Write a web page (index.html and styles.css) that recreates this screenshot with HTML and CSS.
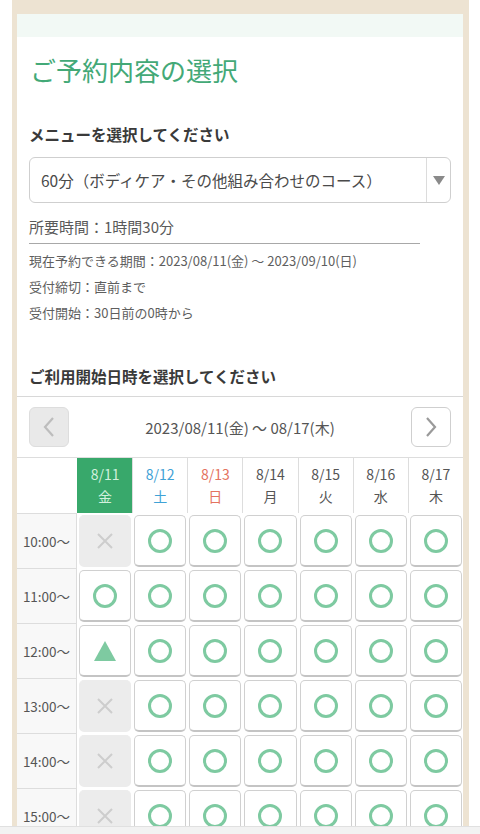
FILE: index.html
```html
<!DOCTYPE html>
<html lang="ja">
<head>
    <meta charset="utf-8">
    <title>ご予約内容の選択</title>
    <link rel="stylesheet" href="styles.css">
</head>
<body>
<div class="frame">
    <div class="card">
        <div class="card-band"></div>
        <h1 class="title">ご予約内容の選択</h1>

        <div class="section">
            <h2 class="sub-title">メニューを選択してください</h2>
            <div class="select">
                <span class="select-text">60分（ボディケア・その他組み合わせのコース）</span>
                <span class="select-arrow"></span>
            </div>
            <p class="duration">所要時間：1時間30分</p>
            <ul class="info">
                <li>現在予約できる期間：2023/08/11(金) 〜 2023/09/10(日)</li>
                <li>受付締切：直前まで</li>
                <li>受付開始：30日前の0時から</li>
            </ul>
            <h2 class="sub-title second">ご利用開始日時を選択してください</h2>
        </div>

        <div class="calendar">
            <div class="cal-nav">
                <button class="nav-btn disabled">
                    <svg width="12" height="22" viewBox="0 0 12 22"><polyline points="10,2 2,11 10,20" fill="none" stroke="#bdbdbd" stroke-width="2.2"/></svg>
                </button>
                <span class="cal-range">2023/08/11(金) 〜 08/17(木)</span>
                <button class="nav-btn">
                    <svg width="12" height="22" viewBox="0 0 12 22"><polyline points="2,2 10,11 2,20" fill="none" stroke="#9a9a9a" stroke-width="2.2"/></svg>
                </button>
            </div>

            <div class="grid">
                <div class="head blank"></div>
                <div class="head today">8/11<br>金</div>
                <div class="head sat">8/12<br>土</div>
                <div class="head sun">8/13<br>日</div>
                <div class="head">8/14<br>月</div>
                <div class="head">8/15<br>火</div>
                <div class="head">8/16<br>水</div>
                <div class="head">8/17<br>木</div>

                <div class="time">10:00〜</div>
                <div class="slot"><span class="mark off"><svg width="16" height="16" viewBox="0 0 16 16"><path d="M1 1L15 15M15 1L1 15" stroke="#cdcdcd" stroke-width="2"/></svg></span></div>
                <div class="slot"><span class="mark ok"></span></div>
                <div class="slot"><span class="mark ok"></span></div>
                <div class="slot"><span class="mark ok"></span></div>
                <div class="slot"><span class="mark ok"></span></div>
                <div class="slot"><span class="mark ok"></span></div>
                <div class="slot"><span class="mark ok"></span></div>

                <div class="time">11:00〜</div>
                <div class="slot"><span class="mark ok"></span></div>
                <div class="slot"><span class="mark ok"></span></div>
                <div class="slot"><span class="mark ok"></span></div>
                <div class="slot"><span class="mark ok"></span></div>
                <div class="slot"><span class="mark ok"></span></div>
                <div class="slot"><span class="mark ok"></span></div>
                <div class="slot"><span class="mark ok"></span></div>

                <div class="time">12:00〜</div>
                <div class="slot"><span class="mark few"><svg width="22" height="20" viewBox="0 0 22 20"><polygon points="11,0 22,20 0,20" fill="#7ecaa1"/></svg></span></div>
                <div class="slot"><span class="mark ok"></span></div>
                <div class="slot"><span class="mark ok"></span></div>
                <div class="slot"><span class="mark ok"></span></div>
                <div class="slot"><span class="mark ok"></span></div>
                <div class="slot"><span class="mark ok"></span></div>
                <div class="slot"><span class="mark ok"></span></div>

                <div class="time">13:00〜</div>
                <div class="slot"><span class="mark off"><svg width="16" height="16" viewBox="0 0 16 16"><path d="M1 1L15 15M15 1L1 15" stroke="#cdcdcd" stroke-width="2"/></svg></span></div>
                <div class="slot"><span class="mark ok"></span></div>
                <div class="slot"><span class="mark ok"></span></div>
                <div class="slot"><span class="mark ok"></span></div>
                <div class="slot"><span class="mark ok"></span></div>
                <div class="slot"><span class="mark ok"></span></div>
                <div class="slot"><span class="mark ok"></span></div>

                <div class="time">14:00〜</div>
                <div class="slot"><span class="mark off"><svg width="16" height="16" viewBox="0 0 16 16"><path d="M1 1L15 15M15 1L1 15" stroke="#cdcdcd" stroke-width="2"/></svg></span></div>
                <div class="slot"><span class="mark ok"></span></div>
                <div class="slot"><span class="mark ok"></span></div>
                <div class="slot"><span class="mark ok"></span></div>
                <div class="slot"><span class="mark ok"></span></div>
                <div class="slot"><span class="mark ok"></span></div>
                <div class="slot"><span class="mark ok"></span></div>

                <div class="time">15:00〜</div>
                <div class="slot"><span class="mark off"><svg width="16" height="16" viewBox="0 0 16 16"><path d="M1 1L15 15M15 1L1 15" stroke="#cdcdcd" stroke-width="2"/></svg></span></div>
                <div class="slot"><span class="mark ok"></span></div>
                <div class="slot"><span class="mark ok"></span></div>
                <div class="slot"><span class="mark ok"></span></div>
                <div class="slot"><span class="mark ok"></span></div>
                <div class="slot"><span class="mark ok"></span></div>
                <div class="slot"><span class="mark ok"></span></div>
            </div>
        </div>
    </div>
</div>
<div class="bottom-bar"></div>
</body>
</html>
```

FILE: styles.css
```css
body {
    margin: 0;
    background-color: #ffffff;
    font-family: "Noto Sans CJK JP", "Noto Sans", sans-serif;
    color: #5a5a5a;
}
.frame {
    width: 446px;
    margin-left: 12px;
    padding: 14px 6px 0 5px;
    background-color: #ede3d2;
}
.card {
    background-color: #ffffff;
}
.card-band {
    height: 23px;
    background-color: #f2f9f5;
}
.title {
    margin: 0;
    padding: 15px 12px 0 13px;
    font-size: 26px;
    line-height: 36px;
    font-weight: normal;
    color: #43a977;
}
.section {
    padding: 35px 12px 9px 12px;
}
.sub-title {
    margin: 0;
    font-size: 15.5px;
    line-height: 22px;
    font-weight: bold;
    color: #3a3a3a;
}
.sub-title.second {
    margin-top: 39px;
}
.select {
    display: flex;
    height: 44px;
    margin-top: 12px;
    border: 1px solid #cfcfcf;
    border-radius: 6px;
}
.select-text {
    flex: 1;
    padding-left: 11px;
    font-size: 15.5px;
    line-height: 44px;
    color: #4a4a4a;
}
.select-arrow {
    width: 23px;
    border-left: 1px solid #dcdcdc;
    display: flex;
    align-items: center;
    justify-content: center;
}
.select-arrow::after {
    content: "";
    border-left: 6px solid transparent;
    border-right: 6px solid transparent;
    border-top: 9px solid #8a8a8a;
}
.duration {
    width: 391px;
    margin: 13px 0 0 0;
    padding-bottom: 5px;
    border-bottom: 1px solid #a8a8a8;
    font-size: 15px;
    line-height: 22px;
    color: #5a5a5a;
}
.info {
    list-style: none;
    margin: 4px 0 0 0;
    padding: 0;
    font-size: 13px;
    line-height: 26px;
    color: #5e5e5e;
}
.calendar {
    border-top: 1px solid #d8d8d8;
}
.cal-nav {
    display: flex;
    align-items: center;
    justify-content: space-between;
    padding: 10px 12px;
}
.nav-btn {
    width: 40px;
    height: 40px;
    padding: 0;
    border: 1px solid #cfcfcf;
    border-radius: 6px;
    background-color: #ffffff;
    display: flex;
    align-items: center;
    justify-content: center;
}
.nav-btn.disabled {
    background-color: #e9e9e9;
    border-color: #dddddd;
}
.cal-range {
    font-size: 15px;
    color: #555555;
}
.grid {
    display: grid;
    grid-template-columns: 60px repeat(7, 1fr);
    grid-auto-rows: 55px;
    grid-template-rows: 55px;
    border-top: 1px solid #dddddd;
}
.head {
    border-left: 1px solid #dddddd;
    text-align: center;
    font-size: 14px;
    line-height: 22px;
    padding-top: 5px;
    color: #555555;
}
.head.blank {
    border-left: none;
}
.head.today {
    background-color: #38a86b;
    color: #d2f0dd;
    border-left-color: #38a86b;
}
.head.sat {
    color: #3fa2d6;
}
.head.sun {
    color: #e4735f;
}
.time {
    background-color: #f8f8f8;
    border-top: 1px solid #dddddd;
    border-right: 1px solid #dddddd;
    display: flex;
    align-items: center;
    justify-content: center;
    font-size: 13.5px;
    color: #555555;
}
.slot {
    padding: 2px 1px 1px 2px;
}
.mark {
    box-sizing: border-box;
    height: 100%;
    display: flex;
    align-items: center;
    justify-content: center;
    border: 1px solid #d0d0d0;
    border-bottom: 2px solid #c4c4c4;
    border-radius: 5px;
    background-color: #ffffff;
}
.mark.ok::after {
    content: "";
    width: 18px;
    height: 18px;
    border: 3px solid #7ecaa1;
    border-radius: 50%;
}
.mark.off {
    background-color: #ececec;
    border-color: #ececec;
}
.bottom-bar {
    position: fixed;
    left: 0;
    right: 0;
    bottom: 0;
    height: 7px;
    background-color: #f2f2f2;
    border-top: 1px solid #e0e0e0;
}
```
